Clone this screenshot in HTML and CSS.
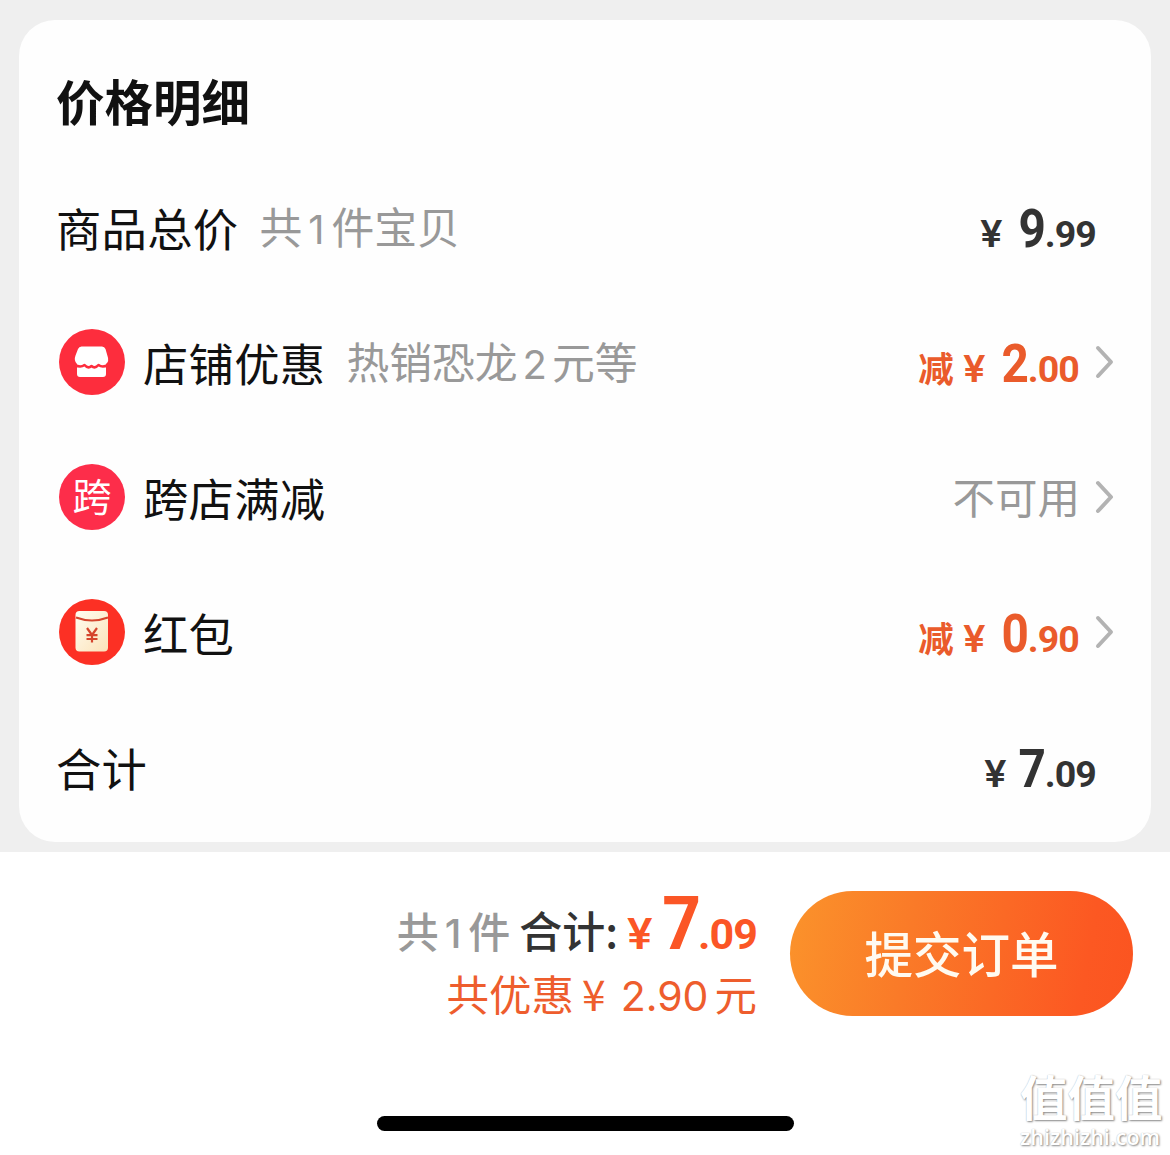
FILE: index.html
```html
<!DOCTYPE html>
<html lang="zh-CN">
<head>
<meta charset="utf-8">
<title>价格明细</title>
<link rel="stylesheet" href="styles.css">
</head>
<body>
<main class="sheet">
  <section class="card">
    <h1 class="title">价格明细</h1>
    <div class="row">
      <span class="label">商品总价</span>
      <span class="note">共<span class="digit one">1</span>件宝贝</span>
      <span class="price dark"><span class="yen">¥</span><span class="int">9</span><span class="dec">.99</span></span>
    </div>
    <div class="row link">
      <svg class="badge" viewBox="0 0 66 66"><circle cx="33" cy="33" r="33" fill="#fd2d3d"/><path d="M22.500 17.500H43Q45.500 17.500 46.500 20L48.500 27Q50.500 32 47 35V45Q47 48 44 48H21Q18 48 18 45V35Q14.500 31.500 16.500 26.500L19 20Q20 17.500 22.500 17.500Z" fill="#fff"/><path d="M16 36Q21.500 39 25.500 36Q29 40 32.500 37Q36 40 39.500 36Q43.500 39 49 36" fill="none" stroke="#fd2d3d" stroke-width="2.600" stroke-linejoin="round"/></svg>
      <span class="label">店铺优惠</span>
      <span class="note">热销恐龙<span class="digit">2</span>元等</span>
      <span class="price orange"><span class="cut">减</span><span class="yen">¥</span><span class="int">2</span><span class="dec">.00</span></span>
      <svg class="chevron" viewBox="0 0 20 34"><path d="M3 3L16 17L3 31"/></svg>
    </div>
    <div class="row link">
      <span class="badge cross">跨</span>
      <span class="label">跨店满减</span>
      <span class="state">不可用</span>
      <svg class="chevron" viewBox="0 0 20 34"><path d="M3 3L16 17L3 31"/></svg>
    </div>
    <div class="row link">
      <svg class="badge" viewBox="0 0 66 66"><defs><linearGradient id="paper" x1="0" y1="0" x2="1" y2="1"><stop offset="0" stop-color="#fffdf1"/><stop offset="1" stop-color="#fbe2b8"/></linearGradient></defs><circle cx="33" cy="33" r="33" fill="#fc3024"/><rect x="16.500" y="12" width="32.500" height="40.500" rx="4" fill="url(#paper)"/><path d="M17 18.500Q33 24.500 49 18.500" fill="none" stroke="#d5452d" stroke-width="2"/><path d="M28 29L33 36L38 29M33 36V43.500M27.500 36.200H38.500M27.500 40H38.500" fill="none" stroke="#d5452d" stroke-width="2.200"/></svg>
      <span class="label">红包</span>
      <span class="price orange"><span class="cut">减</span><span class="yen">¥</span><span class="int">0</span><span class="dec">.90</span></span>
      <svg class="chevron" viewBox="0 0 20 34"><path d="M3 3L16 17L3 31"/></svg>
    </div>
    <div class="row">
      <span class="label">合计</span>
      <span class="price dark"><span class="yen near">¥</span><span class="int">7</span><span class="dec">.09</span></span>
    </div>
  </section>
</main>
<footer class="bar">
  <div class="checkout">
    <div class="sums">
      <div class="total"><span class="count">共<span class="digit one">1</span>件</span><span class="sum">合计:</span><span class="pay"><span class="yen">¥</span><span class="int">7</span><span class="dec">.09</span></span></div>
      <div class="saved">共优惠<span class="saved-yen">¥</span><span class="saved-num">2.90</span>元</div>
    </div>
    <button class="submit">提交订单</button>
  </div>
  <div class="home"></div>
</footer>
<div class="mark"><div class="mark-name">值值值</div><div class="mark-site">zhizhizhi.com</div></div>
</body>
</html>
```
FILE: styles.css
```css
* { box-sizing: border-box; }
body {
  margin: 0;
  height: 1155px;
  overflow: hidden;
  position: relative;
  background: #fff;
  color: #111;
  font-family: "Noto Sans CJK SC", sans-serif;
}
.sheet {
  height: 852px;
  padding: 20px 19px 0;
  background: #efefef;
}
.card {
  height: 822px;
  padding: 0 55px 0 37px;
  border-radius: 36px;
  background: #fefefe;
}
.title {
  margin: 0;
  height: 139px;
  padding-top: 44px;
  font-size: 48.5px;
  line-height: 72px;
  font-weight: 700;
}
.row {
  display: flex;
  align-items: center;
  height: 135px;
  line-height: 66px;
}
.row.link { margin-right: -18px; padding-left: 3px; }
.label { font-size: 45.300px; letter-spacing: 0.300px; }
.note { margin-left: 21px; margin-top: 2px; font-size: 42.800px; color: #999; }
.digit { font-family: Inter, sans-serif; font-size: 40px; margin: 0 5px 0 5px; }
.digit.one { margin: 0 7px 0 6px; }
.price {
  display: flex;
  align-items: baseline;
  margin-left: auto;
  height: 66px;
  margin-top: 5px;
  font-family: Roboto, sans-serif;
  font-weight: 700;
}
.dark { color: #333; }
.orange { color: #ea5b2b; }
.cut { font-family: "Noto Sans CJK SC", sans-serif; font-size: 35.500px; margin-right: 10px; }
.yen { display: inline-block; transform: scaleX(1.1); font-family: Inter, sans-serif; font-weight: 600; font-size: 36.500px; margin-right: 14px; }
.yen.near { margin-right: 10px; }
.int { display: inline-block; font-size: 53px; margin-right: -1px; transform: translateX(2px) scaleX(.9); }
.dec { font-size: 37.500px; letter-spacing: -0.900px; }
.badge { flex: none; width: 66px; height: 66px; margin-right: 18px; }
.cross {
  border-radius: 50%;
  background: #fd2d4a;
  color: #fff;
  font-size: 39px;
  line-height: 61px;
  text-align: center;
}
.chevron { flex: none; width: 20px; height: 34px; margin-left: 15px; margin-right: -1px; }
.row.link .price { margin-right: 1px; }
.chevron path { fill: none; stroke: #b3b3b3; stroke-width: 4; stroke-linecap: round; stroke-linejoin: round; }
.state { margin-left: auto; margin-top: -2px; font-size: 42.500px; color: #999; }
.bar { height: 303px; background: #fff; }
.checkout {
  display: flex;
  justify-content: flex-end;
  height: 164px;
  padding: 39px 37px 0 0;
}
.sums { width: 400px; margin: -5px 33px 0 0; display: flex; flex-direction: column; align-items: flex-end; }
.total { display: flex; align-items: baseline; height: 79px; line-height: 74px; white-space: nowrap; }
.count, .sum { position: relative; top: -1px; font-weight: 500; }
.count { font-size: 42px; color: #999; }
.sum { margin-left: 9px; font-size: 43px; color: #333; }
.pay { display: flex; align-items: baseline; margin-left: 10px; font-family: Roboto, sans-serif; font-weight: 700; color: #fb5626; }
.pay .yen { font-size: 42px; margin-right: 6px; }
.pay .int { font-size: 75px; margin-right: -3px; }
.pay .dec { font-size: 43px; }
.saved { height: 56px; line-height: 56px; font-size: 42.500px; color: #ee5d2d; white-space: nowrap; }
.saved-yen { margin: 0 15px 0 8px; }
.saved-num { font-family: Inter, sans-serif; font-size: 41px; margin-right: 6px; }
.submit {
  width: 343px;
  height: 125px;
  padding: 0;
  border: 0;
  border-radius: 63px;
  background: linear-gradient(100deg, #fb932b, #fa7a28 35%, #fc5822 85%, #fb5420);
  color: #fffaf0;
  font: 500 48.500px/121px "Noto Sans CJK SC", sans-serif;
  padding-bottom: 2px;
}
.home { width: 417px; height: 15px; margin: 100px auto 0; border-radius: 8px; background: #000; }
.mark {
  position: absolute;
  left: 1020px;
  top: 1061px;
  color: #fff;
  text-shadow: 1px 1px 2px #888, 0 0 1px #bbb;
  white-space: nowrap;
}
.mark-name { font-size: 47.500px; line-height: 70px; font-weight: 700; }
.mark-site { margin-top: -7px; font: 600 21.500px/26px "Open Sans", sans-serif; }
```
